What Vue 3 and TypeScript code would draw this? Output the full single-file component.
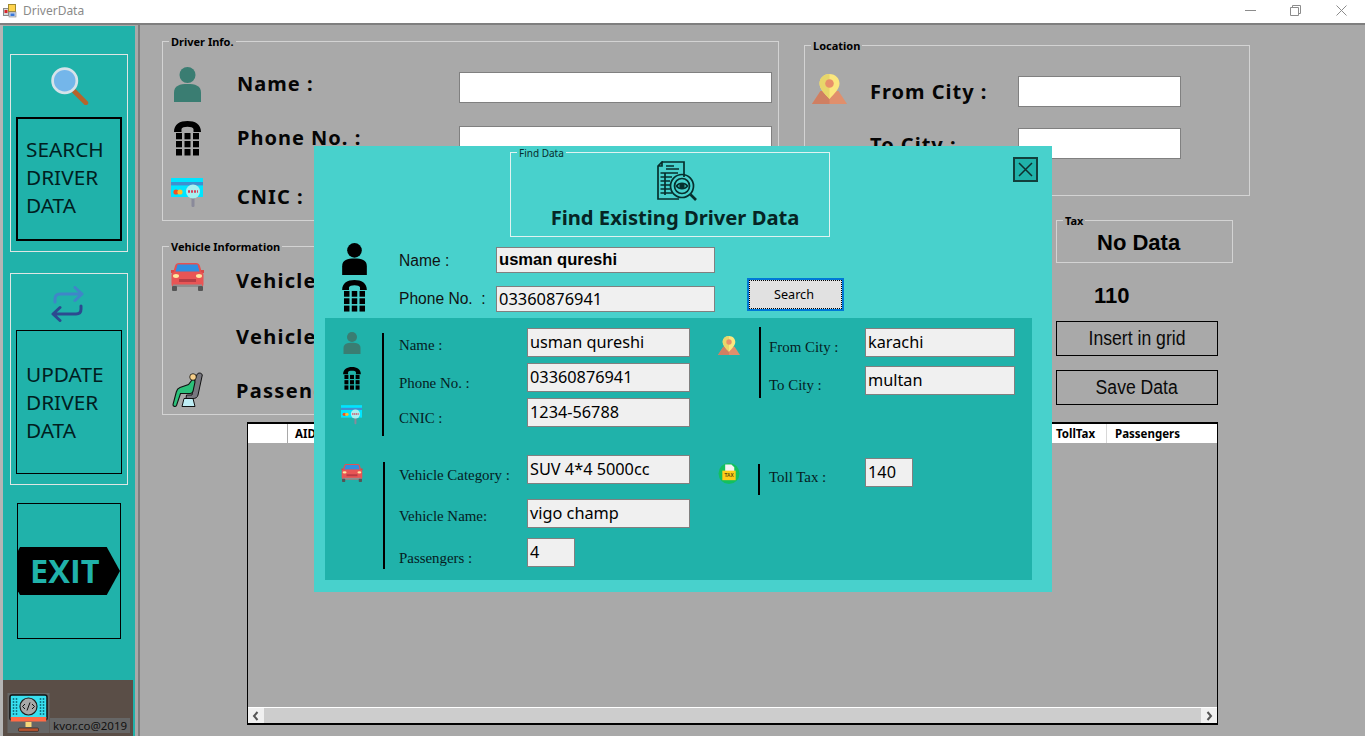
<script setup lang="ts">
const tableCols: { label: string; width: number }[] = [
  { label: 'TollTax', width: 59 },
  { label: 'Passengers', width: 110 },
]
</script>

<template>
  <div class="app">
    <svg class="defs" aria-hidden="true">
      <defs>
        <symbol id="i-person" viewBox="0 0 27 35">
          <circle cx="13.5" cy="8" r="8" fill="currentColor" />
          <path d="M0 35V25.5C0 18.5 6 17 13.5 17S27 18.5 27 25.5V35Z" fill="currentColor" />
        </symbol>
        <symbol id="i-phone" viewBox="0 0 27 35">
          <path d="M0 11C0 3 6 0 13.5 0S27 3 27 11H19.5V8C19 5 8 5 7.5 8V11Z" fill="currentColor" />
          <g fill="currentColor">
            <rect x="2" y="12" width="6" height="6.3" /><rect x="10.5" y="12" width="6" height="6.3" /><rect x="19" y="12" width="6" height="6.3" />
            <rect x="2" y="20" width="6" height="6.3" /><rect x="10.5" y="20" width="6" height="6.3" /><rect x="19" y="20" width="6" height="6.3" />
            <rect x="2" y="28" width="6" height="6.5" /><rect x="10.5" y="28" width="6" height="6.5" /><rect x="19" y="28" width="6" height="6.5" />
          </g>
        </symbol>
        <symbol id="i-card" viewBox="0 0 32 30">
          <rect x="0" y="0" width="32" height="19" fill="#00e5ff" />
          <rect x="0" y="4" width="32" height="3.4" fill="#3f8fd0" />
          <circle cx="5" cy="14" r="2.6" fill="#f4511e" />
          <circle cx="9" cy="14" r="2.6" fill="#fbc02d" />
          <rect x="20.5" y="19" width="3" height="10" rx="1.2" fill="#8a8a9a" />
          <circle cx="22" cy="13.5" r="7" fill="#a8f0f0" />
          <path d="M17 13.5h10" stroke="#d8405a" stroke-width="2.6" stroke-dasharray="2 1" />
        </symbol>
        <symbol id="i-car" viewBox="0 0 35 28">
          <path d="M5 3C5.500 1 7 0 9 0H26C28 0 29.500 1 30 3L32 10H3Z" fill="#e65050" />
          <path d="M7.500 1.500H27.500L29.500 8.500H5.500Z" fill="#2f8fe0" />
          <path d="M1 7H4V10H1ZM31 7H34V10H31Z" fill="#d84848" />
          <rect x="1.500" y="9" width="32" height="15" rx="3" fill="#e85555" />
          <ellipse cx="6" cy="13" rx="3" ry="1.900" fill="#ffe8a0" />
          <ellipse cx="29" cy="13" rx="3" ry="1.900" fill="#ffe8a0" />
          <rect x="9" y="16" width="17" height="3" fill="#b73c44" />
          <rect x="3" y="21.500" width="29" height="2.500" fill="#8f8f8f" />
          <rect x="2" y="23" width="5" height="5" rx="1" fill="#555" />
          <rect x="28" y="23" width="5" height="5" rx="1" fill="#555" />
        </symbol>
        <symbol id="i-pin" viewBox="0 0 35 30">
          <path d="M8.500 17H26.500L35 30H0Z" fill="#e08f6c" />
          <path d="M8.500 17H17.500V30H0Z" fill="#cf7f62" />
          <path d="M17.500 0C11.200 0 7.500 4.600 7.500 9.500C7.500 15 13 20 17.500 25C22 20 27.500 15 27.500 9.500C27.500 4.600 23.800 0 17.500 0Z" fill="#fbe77e" />
          <path d="M17.500 0C11.200 0 7.500 4.600 7.500 9.500C7.500 15 13 20 17.500 25Z" fill="#e8d66a" />
          <circle cx="17.500" cy="9.500" r="4.300" fill="#e8906a" />
        </symbol>
        <symbol id="i-seat" viewBox="0 0 31 36">
          <path d="M25 2.500C26 0.500 29.500 0.500 30.300 3L26 23C25.500 25.500 23.500 26.500 21 26.500H14L14.500 23H20L22 11Z" fill="#77777f" stroke="#111" stroke-width="1" />
          <path d="M12 26.500H21L23 34.500H10Z" fill="#bfeef5" stroke="#111" stroke-width="1" />
          <path d="M20 8L16.500 12.500L8 15.500C5.500 16.500 4.800 18 4.300 20L1 32.500C0.700 34.500 3.500 35.200 4.500 33.500L8.500 21.500H18C20 21.500 21 20 21.300 18L23 10C23 8 21 7 20 8Z" fill="#2cc07a" stroke="#111" stroke-width="1.100" />
          <circle cx="21" cy="5" r="3.300" fill="#f7d08a" stroke="#111" stroke-width="0.800" />
        </symbol>
        <symbol id="i-tax" viewBox="0 0 22 22">
          <circle cx="11" cy="11" r="11" fill="#12c05f" />
          <path d="M7 1.500H13.500L16.500 4.500V9H7Z" fill="#f4f4f4" />
          <rect x="4" y="8" width="14" height="10" fill="#ffcc1a" />
          <text x="11" y="15" text-anchor="middle" font-family="Liberation Sans, sans-serif" font-weight="700" font-size="5" fill="#5a4a08">TAX</text>
        </symbol>
      </defs>
    </svg>

    <header class="titlebar">
      <svg class="app-icon" viewBox="0 0 14 14">
        <rect x="0.500" y="4.500" width="5" height="7" fill="#d9d9d9" stroke="#8a8a8a" />
        <rect x="1.500" y="6" width="3" height="3" fill="#d8262c" />
        <rect x="5.500" y="0.500" width="7" height="7" fill="#ffd34d" stroke="#a08a30" />
        <rect x="6" y="8" width="7" height="5" fill="#cfd8e8" stroke="#8a8a8a" stroke-width="0.600" />
        <rect x="7.500" y="9.500" width="4" height="2.500" fill="#3a78d8" />
      </svg>
      <span class="app-title">DriverData</span>
      <div class="win-controls">
        <svg width="11" height="11" viewBox="0 0 11 11" class="wc-min"><path d="M0 5.500H11" stroke="#8c8c8c" /></svg>
        <svg width="11" height="11" viewBox="0 0 11 11" class="wc-max"><path d="M0.500 2.500H8.500V10.500H0.500ZM2.500 2.500V0.500H10.500V8.500H8.500" stroke="#8c8c8c" fill="none" /></svg>
        <svg width="11" height="11" viewBox="0 0 11 11" class="wc-close"><path d="M0.500 0.500L10.500 10.500M10.500 0.500L0.500 10.500" stroke="#8c8c8c" /></svg>
      </div>
    </header>

    <div class="shell">
      <aside class="sidebar">
        <section class="side-panel panel-search">
          <svg class="side-icon mag" viewBox="0 0 36 36">
            <path d="M22 23L33 34" stroke="#b5642c" stroke-width="4.500" stroke-linecap="round" />
            <circle cx="13" cy="13" r="11.500" fill="#74b6ea" stroke="#d6e2ea" stroke-width="2.600" />
          </svg>
          <button class="side-btn thick">SEARCH<br />DRIVER<br />DATA</button>
        </section>
        <section class="side-panel panel-update">
          <svg class="side-icon swap" viewBox="0 0 34 36">
            <path d="M4 16V13C4 9 6 8 9 8H30M24 1.500L31 8L24 14.500" fill="none" stroke="#3f86c8" stroke-width="3" stroke-linecap="round" stroke-linejoin="round" />
            <path d="M30 20V23C30 27 28 28 25 28H3M9 21.500L2 28L9 34.500" fill="none" stroke="#2c4a90" stroke-width="3" stroke-linecap="round" stroke-linejoin="round" />
          </svg>
          <button class="side-btn tall">UPDATE<br />DRIVER<br />DATA</button>
        </section>
        <button class="exit-btn">
          <span class="exit-tag">EXIT</span>
        </button>
        <footer class="brand">
          <svg class="brand-icon" viewBox="0 0 42 40">
            <rect width="42" height="40" fill="#666" />
            <rect x="2.500" y="2" width="37" height="25" rx="2" fill="#38e0f0" stroke="#111" stroke-width="1.500" />
            <rect x="3.200" y="24" width="35.600" height="4.500" fill="#ff6a45" />
            <circle cx="21" cy="13.500" r="8.500" fill="#a8a8a8" stroke="#222" stroke-width="1.200" />
            <path d="M17.500 11L15 13.500L17.500 16M24.500 11L27 13.500L24.500 16M22.500 9.500L19.500 17.500" stroke="#111" stroke-width="1" fill="none" />
            <g stroke="#117788" stroke-width="1.500" stroke-dasharray="2 1">
              <path d="M6 5V22M9 5V22M33 5V22M36 5V22" />
            </g>
            <rect x="18" y="29" width="6" height="5" fill="#f7d77a" />
            <rect x="11" y="35" width="20" height="3.400" rx="1" fill="#b5532f" stroke="#222" stroke-width="0.600" />
          </svg>
          <span class="brand-text">kvor.co@2019</span>
        </footer>
      </aside>

      <main class="main">
        <div class="top-area">
          <div class="left-col">
            <fieldset class="group driver-group">
              <legend>Driver Info.</legend>
              <div class="bg-row r1">
                <svg class="ic27 teal-dark"><use href="#i-person" /></svg>
                <span class="big-label">Name :</span>
                <input class="bg-input wide" />
              </div>
              <div class="bg-row r2">
                <svg class="ic27"><use href="#i-phone" /></svg>
                <span class="big-label">Phone No. :</span>
                <input class="bg-input wide" />
              </div>
              <div class="bg-row r3">
                <svg class="ic-card"><use href="#i-card" /></svg>
                <span class="big-label">CNIC :</span>
                <input class="bg-input wide" />
              </div>
            </fieldset>
            <fieldset class="group vehicle-group">
              <legend>Vehicle Information</legend>
              <div class="v-row v1">
                <svg class="ic-car"><use href="#i-car" /></svg>
                <span class="big-label poppins">Vehicle Category</span>
              </div>
              <div class="v-row v2">
                <span class="ic-car"></span>
                <span class="big-label poppins">Vehicle Name</span>
              </div>
              <div class="v-row v3">
                <svg class="ic-seat"><use href="#i-seat" /></svg>
                <span class="big-label poppins">Passengers</span>
              </div>
            </fieldset>
          </div>
          <div class="right-col">
            <fieldset class="group location-group">
              <legend>Location</legend>
              <div class="loc-row l1">
                <svg class="ic-pin"><use href="#i-pin" /></svg>
                <span class="big-label">From City :</span>
                <input class="bg-input city" />
              </div>
              <div class="loc-row l2">
                <span class="ic-pin"></span>
                <span class="big-label">To City :</span>
                <input class="bg-input city" />
              </div>
            </fieldset>
            <div class="tax-col">
              <fieldset class="group tax-group">
                <legend>Tax</legend>
                <div class="no-data">No Data</div>
              </fieldset>
              <div class="toll-val">110</div>
              <button class="flat-btn first"><span>Insert in grid</span></button>
              <button class="flat-btn second"><span>Save Data</span></button>
            </div>
          </div>
        </div>

        <div class="grid-view">
          <div class="grid-head">
            <div class="corner"></div>
            <div class="hcell aid">AID</div>
            <div class="hfill"></div>
            <div v-for="c in tableCols" :key="c.label" class="hcell" :style="{ width: c.width + 'px' }">{{ c.label }}</div>
          </div>
          <div class="grid-body"></div>
          <div class="hscroll">
            <svg class="sb-arrow" viewBox="0 0 8 10" width="8" height="10"><path d="M5.500 1L2 5L5.500 9" stroke="#555" stroke-width="2" fill="none" /></svg>
            <div class="sb-thumb"></div>
            <svg class="sb-arrow" viewBox="0 0 8 10" width="8" height="10"><path d="M2.500 1L6 5L2.500 9" stroke="#555" stroke-width="2" fill="none" /></svg>
          </div>
        </div>
      </main>
    </div>

    <div class="modal">
      <button class="close-x" aria-label="Close">
        <svg width="15" height="15" viewBox="0 0 15 15"><path d="M1 1L14 14M14 1L1 14" stroke="#0f2f2e" stroke-width="1.500" /></svg>
      </button>
      <fieldset class="find-group">
        <legend>Find Data</legend>
        <svg class="find-icon" viewBox="0 0 40 41" fill="none" stroke="#062f2d" stroke-width="1.700">
          <path d="M5 1H27V16M22 38H1V5L5 1V5H1" />
          <path d="M9 5H17M9 8H22M3.500 12H21M3.500 16H15M3.500 20H13M3.500 24H13M3.500 28H13M3.500 32H15M8 12V34" />
          <circle cx="25" cy="25" r="11.500" />
          <circle cx="25" cy="25" r="7.500" />
          <path d="M19.500 25C22 21.500 28 21.500 30.500 25C28 28.500 22 28.500 19.500 25Z" />
          <circle cx="25" cy="25" r="1.800" fill="#062f2d" />
          <path d="M33.500 33.500L39 39" stroke-width="2.600" />
        </svg>
        <div class="find-title">Find Existing Driver Data</div>
      </fieldset>

      <div class="search-row">
        <div class="search-icons">
          <svg class="ic-s"><use href="#i-person" /></svg>
          <svg class="ic-s"><use href="#i-phone" /></svg>
        </div>
        <div class="search-form">
          <label class="s-label first-label">Name :</label>
          <div class="s-input bold">usman qureshi</div>
          <label class="s-label">Phone No.&nbsp; :</label>
          <div class="s-input">03360876941</div>
        </div>
        <button class="search-btn"><span>Search</span></button>
      </div>

      <div class="result">
        <div class="res-top">
          <div class="res-icons first-icons">
            <svg class="ri-person"><use href="#i-person" /></svg>
            <svg class="ri-phone"><use href="#i-phone" /></svg>
            <svg class="ri-card"><use href="#i-card" /></svg>
          </div>
          <div class="vbar bar-a"></div>
          <div class="fields fields-a">
            <span class="r-label">Name :</span><div class="r-input">usman qureshi</div>
            <span class="r-label">Phone No. :</span><div class="r-input">03360876941</div>
            <span class="r-label">CNIC :</span><div class="r-input">1234-56788</div>
          </div>
          <svg class="ri-pin"><use href="#i-pin" /></svg>
          <div class="vbar bar-b"></div>
          <div class="fields fields-b">
            <span class="r-label">From City :</span><div class="r-input city-in">karachi</div>
            <span class="r-label">To City :</span><div class="r-input city-in">multan</div>
          </div>
        </div>
        <div class="res-bottom">
          <svg class="ri-car"><use href="#i-car" /></svg>
          <div class="vbar bar-c"></div>
          <div class="fields fields-c">
            <span class="r-label">Vehicle Category :</span><div class="r-input">SUV 4*4 5000cc</div>
            <span class="r-label">Vehicle Name:</span><div class="r-input">vigo champ</div>
            <span class="r-label">Passengers :</span><div class="r-input small">4</div>
          </div>
          <svg class="ri-tax"><use href="#i-tax" /></svg>
          <div class="vbar bar-d"></div>
          <div class="fields fields-d">
            <span class="r-label">Toll Tax :</span><div class="r-input small">140</div>
          </div>
        </div>
      </div>
    </div>
  </div>
</template>

<style>
html, body { margin: 0; padding: 0; background: #a9a9a9; overflow: hidden; }
</style>

<style scoped>
* { box-sizing: border-box; }
.app {
  position: relative;
  width: 1365px;
  height: 736px;
  overflow: hidden;
  background: #a9a9a9;
  font-family: "Noto Sans", sans-serif;
  color: #000;
}
.defs { position: absolute; width: 0; height: 0; }

/* Title bar */
.titlebar {
  height: 25px;
  background: #fff;
  border-bottom: 2px solid #7f7f7f;
  display: flex;
  align-items: center;
  padding: 0 18px 2px 3px;
}
.app-icon { width: 14px; height: 14px; }
.app-title { margin-left: 6px; font: 12px "Noto Sans", sans-serif; color: #8a8a8a; }
.win-controls { margin-left: auto; display: flex; align-items: center; }
.wc-min { margin-right: 34px; }
.wc-max { margin-right: 35px; }

.shell { display: flex; height: 711px; }

/* Sidebar */
.sidebar {
  width: 140px;
  flex: none;
  height: 100%;
  padding: 1px 0 0;
  border-left: 3px solid;
  border-image: linear-gradient(to right, #b5b5b5 0 33%, #7f7f7f 33% 100%) 1;
  border-right: 2px solid #7f7f7f;
  background: linear-gradient(#a9a9a9 0 1px, #20b2aa 1px) no-repeat 0 0 / 132px 100%, #a9a9a9;
  display: flex;
  flex-direction: column;
  align-items: flex-start;
}
.side-panel {
  margin-left: 7px;
  width: 118px;
  border: 1px solid #dfe6e4;
  display: flex;
  flex-direction: column;
  align-items: center;
}
.panel-search { margin-top: 28px; height: 198px; }
.panel-update { margin-top: 21px; height: 212px; }
.side-icon { display: block; }
.mag { width: 38px; height: 38px; margin-top: 12px; margin-left: 1px; }
.swap { width: 34px; height: 36px; margin-top: 12px; margin-right: 2px; }
.side-btn {
  display: block;
  width: 106px;
  padding: 0 0 0 8px;
  background: transparent;
  border: 1px solid #000;
  text-align: left;
  font: 20.8px/28px "Noto Sans", sans-serif;
  color: #00201f;
}
.side-btn.thick { height: 124px; margin-top: 12px; border-width: 2px; padding-bottom: 4px; }
.side-btn.tall { height: 144px; margin-top: 8px; padding-left: 9px; padding-bottom: 0; }
.exit-btn {
  margin: 18px 0 0 14px;
  width: 104px;
  height: 136px;
  background: transparent;
  border: 1px solid #000;
  padding: 0;
  display: flex;
  align-items: center;
}
.exit-tag {
  display: block;
  width: 103px;
  height: 48px;
  background: #000;
  clip-path: polygon(2% 0, 87% 0, 100% 50%, 87% 100%, 2% 100%, 0 92%, 0 8%);
  color: #20b2aa;
  font: 700 32.5px/48px "Open Sans", sans-serif;
  letter-spacing: 0;
  text-align: left;
  padding-left: 12px;
}
.brand {
  margin-top: auto;
  width: 130px;
  height: 56px;
  background: #5a4e47;
  display: flex;
  align-items: flex-end;
  padding: 0 0 3px 4px;
}
.brand-icon { width: 43px; height: 40px; display: block; }
.brand-text {
  background: #666;
  font: 11.5px/15px "Noto Sans", sans-serif;
  color: #111;
  width: 80px;
  height: 15px;
  padding-left: 3px;
  white-space: nowrap;
}

/* Main */
.main { flex: 1; min-width: 0; }
.top-area { display: flex; height: 397px; }
.left-col { width: 639px; padding: 16px 0 0 22px; flex: none; }
.right-col { padding-top: 20px; margin-left: 25px; width: 446px; flex: none; }

.group {
  margin: 0;
  padding: 0;
  border: 1px solid #d3d3d3;
  position: relative;
  min-width: 0;
}
.group legend {
  position: absolute;
  top: -7px;
  left: 6px;
  padding: 0 2px;
  background: #a9a9a9;
  font: 700 11px/13px "Noto Sans", sans-serif;
  color: #000;
  white-space: nowrap;
}
.driver-group { width: 617px; height: 180px; }
.vehicle-group { width: 640px; height: 169px; margin-top: 25px; }
.location-group { width: 446px; height: 151px; }

.bg-row { display: flex; align-items: center; height: 35px; padding-left: 11px; }
.r1 { margin-top: 25px; }
.r2 { margin-top: 19px; }
.r3 { margin-top: 21px; padding-left: 8px; }
.ic27 { width: 27px; height: 35px; flex: none; color: #000; }
.teal-dark { color: #3a7d72; }
.ic-card { width: 32px; height: 30px; flex: none; margin-top: -3px; }
.big-label {
  font: 700 20px/26px "Noto Sans", sans-serif;
  letter-spacing: 1px;
  white-space: nowrap;
  color: #050505;
}
.bg-row .big-label { width: 222px; margin-left: 36px; flex: none; margin-top: -2px; }
.r3 .big-label { margin-left: 34px; margin-top: 5px; }
.bg-input {
  display: block;
  background: #fff;
  border: 1px solid #808080;
  border-radius: 0;
  padding: 0;
  outline: none;
}
.bg-input.wide { width: 313px; height: 31px; margin-top: 6px; }
.bg-input.city { width: 163px; height: 31px; flex: none; }
.v-row { display: flex; align-items: center; height: 30px; padding-left: 7px; }
.v1 { margin-top: 17px; }
.v2 { margin-top: 26px; }
.v3 { margin-top: 22px; height: 36px; }
.ic-car { width: 35px; height: 28px; flex: none; display: block; }
.v1 .ic-car { margin-top: -4px; }
.ic-seat { width: 31px; height: 36px; flex: none; margin-left: 2px; margin-right: 2px; }
.poppins { margin-left: 31px; letter-spacing: 1.3px; margin-top: 4px; }
.v3 .poppins { margin-top: 2px; }
.loc-row { display: flex; align-items: center; height: 31px; padding-left: 7px; }
.l1 { margin-top: 30px; }
.l2 { margin-top: 21px; }
.ic-pin { width: 35px; height: 30px; flex: none; display: block; }
.l1 .ic-pin { margin-top: -6px; }
.loc-row .big-label { width: 148px; margin-left: 23px; flex: none; }
.l2 .big-label { margin-top: 3px; }

.tax-col { padding-left: 252px; }
.tax-group { width: 177px; height: 43px; margin-top: 24px; }
.no-data { font: 700 22px/43px "Liberation Sans", sans-serif; padding-left: 40px; }
.toll-val { font: 700 22px/26px "Liberation Sans", sans-serif; margin-top: 20px; padding-left: 38px; }
.flat-btn {
  display: block;
  width: 162px;
  height: 35px;
  background: transparent;
  border: 1px solid #000;
  padding: 0;
  font: 20px/33px "Liberation Sans", sans-serif;
  color: #0a0a0a;
}
.flat-btn span { display: inline-block; transform: scaleX(0.88); white-space: nowrap; }
.flat-btn.first { margin-top: 12px; }
.flat-btn.second { margin-top: 14px; }

/* grid */
.grid-view {
  margin-left: 107px;
  width: 971px;
  height: 303px;
  border: 1px solid #000;
  border-top-width: 2px;
  border-bottom-width: 2px;
  display: flex;
  flex-direction: column;
}
.grid-head { height: 19px; background: #fff; display: flex; flex: none; }
.corner { width: 40px; border-right: 1px solid #a9a9a9; }
.hcell {
  font: 700 11.5px/19px "Noto Sans", sans-serif;
  padding-left: 8px;
  border-right: 1px solid #d8d8d8;
  flex: none;
  white-space: nowrap;
}
.hcell.aid { width: 60px; padding-left: 7px; }
.hfill { flex: 1; }
.hcell:last-child { border-right: 0; }
.grid-body { flex: 1; }
.hscroll {
  height: 16px;
  background: #f0f0f0;
  border-top: 1px solid #fff;
  display: flex;
  align-items: center;
  flex: none;
}
.sb-arrow { flex: none; margin: 0 4px; }
.sb-thumb { flex: 1; height: 15px; background: #cdcdcd; }

/* Modal */
.modal {
  position: absolute;
  left: 314px;
  top: 146px;
  width: 738px;
  height: 446px;
  background: #48d1cc;
}
.close-x {
  position: absolute;
  left: 699px;
  top: 11px;
  width: 25px;
  height: 25px;
  padding: 0;
  background: #20b2aa;
  border: 2px solid #123f3c;
  display: flex;
  align-items: center;
  justify-content: center;
}
.find-group {
  margin: 6px 0 0 196px;
  padding: 0;
  width: 320px;
  height: 85px;
  border: 1px solid #dff3f1;
  position: relative;
  display: flex;
  flex-direction: column;
  align-items: center;
}
.find-group legend {
  position: absolute;
  top: -6px;
  left: 6px;
  padding: 0 2px;
  background: #48d1cc;
  font: 10px/12px "Noto Sans", sans-serif;
  color: #062c2b;
}
.find-icon { width: 40px; height: 41px; display: block; margin: 8px 0 0 13px; }
.find-title { font: 700 20.2px/26px "Noto Sans", sans-serif; color: #062524; margin-top: 2px; margin-left: 10px; white-space: nowrap; }

.search-row { display: flex; height: 81px; }
.search-icons { width: 85px; padding: 6px 0 0 28px; display: flex; flex-direction: column; gap: 5px; flex: none; }
.ic-s { width: 25px; height: 32px; color: #000; display: block; }
.search-form {
  display: grid;
  grid-template-columns: 97px 219px;
  grid-template-rows: 26px 26px;
  row-gap: 13px;
  align-items: center;
  margin-top: 10px;
  height: 65px;
}
.s-label { font: 15.6px/20px "Liberation Sans", sans-serif; color: #111; }
.first-label { margin-top: 2px; }
.s-input {
  height: 26px;
  background: #f0f0f0;
  border: 1px solid #808080;
  padding-left: 2px;
  font: 16.4px/24px "Noto Sans", sans-serif;
  color: #000;
  white-space: nowrap;
}
.s-input.bold { font: 700 16.6px/24px "Liberation Sans", sans-serif; }
.search-btn {
  margin: 41px 0 0 32px;
  width: 97px;
  height: 33px;
  padding: 0 3px 0 0;
  border: 2px solid #0078d7;
  background: #e1e1e1;
  outline: 1px dotted #000;
  outline-offset: -3px;
  font: 12.6px "Noto Sans", sans-serif;
  color: #000;
}

.result {
  margin-left: 11px;
  width: 707px;
  height: 262px;
  background: #20b2aa;
}
.res-top, .res-bottom { display: flex; align-items: flex-start; }
.res-top { height: 137px; padding-top: 10px; }
.res-bottom { height: 125px; }
.res-icons { display: flex; flex-direction: column; align-items: center; width: 21px; margin-left: 16px; flex: none; }
.ri-person { width: 18px; height: 22px; color: #3a7d72; margin-top: 4px; display: block; }
.ri-phone { width: 18px; height: 23px; color: #000; margin-top: 13px; display: block; }
.ri-card { width: 21px; height: 20px; margin-top: 15px; display: block; }
.vbar { width: 2px; background: #000; flex: none; }
.bar-a { height: 103px; margin-left: 20px; margin-top: 5px; }
.fields { display: grid; align-items: start; flex: none; }
.fields-a {
  margin-left: 15px;
  grid-template-columns: 128px 163px;
  grid-template-rows: 29px 29px 29px;
  row-gap: 6px;
  width: 291px;
}
.ri-pin { width: 22px; height: 19px; margin: 8px 0 0 28px; display: block; flex: none; }
.bar-b { height: 71px; margin-left: 19px; margin-top: -1px; }
.fields-b {
  margin-left: 8px;
  grid-template-columns: 96px 150px;
  grid-template-rows: 29px 29px;
  row-gap: 9px;
}
.res-bottom .ri-car { width: 24px; height: 18px; margin: 9px 0 0 15px; display: block; flex: none; }
.bar-c { height: 107px; margin-left: 19px; margin-top: 7px; }
.fields-c {
  margin-left: 14px;
  grid-template-columns: 128px 163px;
  grid-template-rows: 44px 39px 29px;
  width: 291px;
}
.ri-tax { width: 22px; height: 21px; margin: 8px 0 0 28px; display: block; flex: none; }
.bar-d { height: 31px; margin-left: 18px; margin-top: 9px; }
.fields-d {
  margin-left: 9px;
  grid-template-columns: 96px 48px;
  grid-template-rows: 29px;
  margin-top: 3px;
}
.r-label { font: 14.9px/18px "Liberation Serif", serif; color: #05201f; white-space: nowrap; margin-top: 10px; }
.fields-a .r-label:nth-of-type(1) { margin-top: 8px; }
.fields-a .r-label:nth-of-type(n + 2) { margin-top: 11px; }
.fields-c .r-label:nth-of-type(odd) { margin-top: 11px; }
.fields-c .r-label:nth-of-type(2) { margin-top: 8px; }
.r-input {
  width: 163px;
  height: 29px;
  background: #f0f0f0;
  border: 1px solid #808080;
  padding-left: 2px;
  font: 16.3px/26px "Noto Sans", sans-serif;
  color: #000;
  white-space: nowrap;
}
.r-input.city-in { width: 150px; }
.r-input.small { width: 48px; }
</style>
